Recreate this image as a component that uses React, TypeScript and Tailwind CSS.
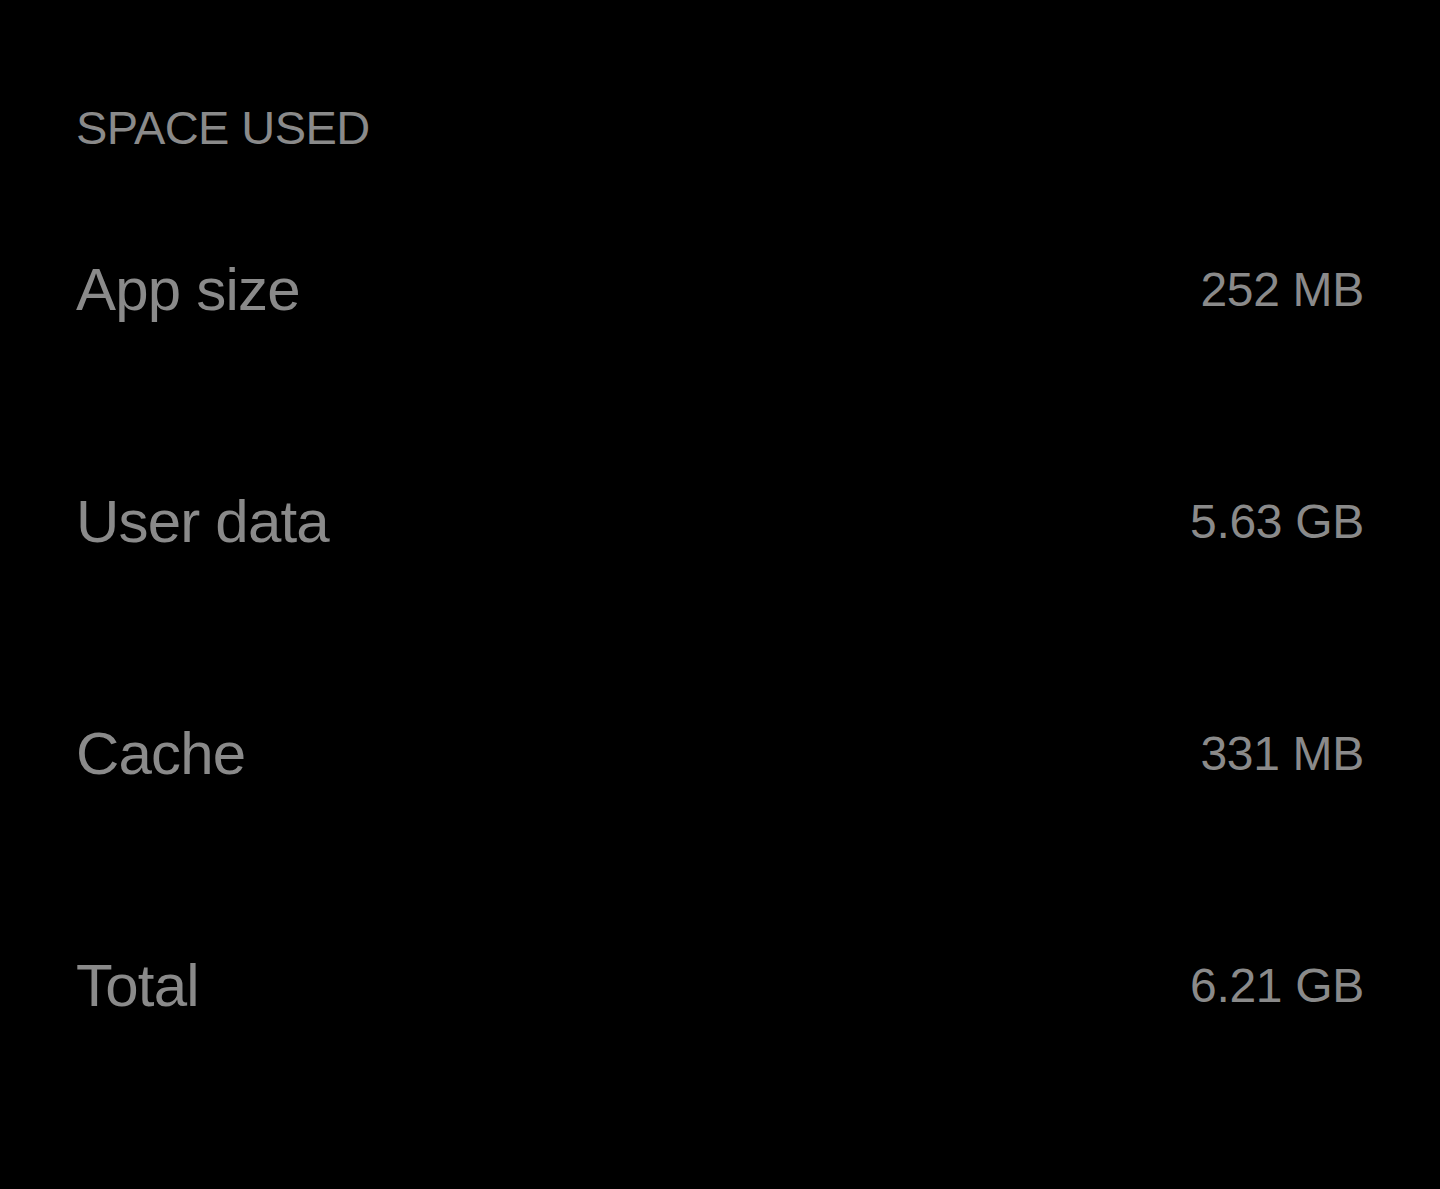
import React from "react";

interface UsageRow {
  label: string;
  value: string;
}

// Storage breakdown for the app detail screen
const ROWS: UsageRow[] = [
  { label: "App size", value: "252 MB" },
  { label: "User data", value: "5.63 GB" },
  { label: "Cache", value: "331 MB" },
  { label: "Total", value: "6.21 GB" },
];

const SpaceRow: React.FC<UsageRow> = ({ label, value }) => (
  <div className="flex h-[232px] items-center justify-between">
    <span className="text-[60px] leading-[60px] tracking-[-0.8px] text-[#8a8a8a]">{label}</span>
    <span className="text-[48px] leading-[48px] tracking-[-0.3px] text-[#8a8a8a]">{value}</span>
  </div>
);

export default function App() {
  return (
    <div
      className="min-h-screen bg-black px-[76px] pt-[104px]"
      style={{ fontFamily: '"Liberation Sans", Arial, sans-serif' }}
    >
      <h2 className="text-[47px] leading-[48px] tracking-[-0.6px] text-[#8a8a8a]">SPACE USED</h2>
      <div className="mt-[22px]">
        {ROWS.map(r => (
          <SpaceRow key={r.label} label={r.label} value={r.value} />
        ))}
      </div>
    </div>
  );
}
